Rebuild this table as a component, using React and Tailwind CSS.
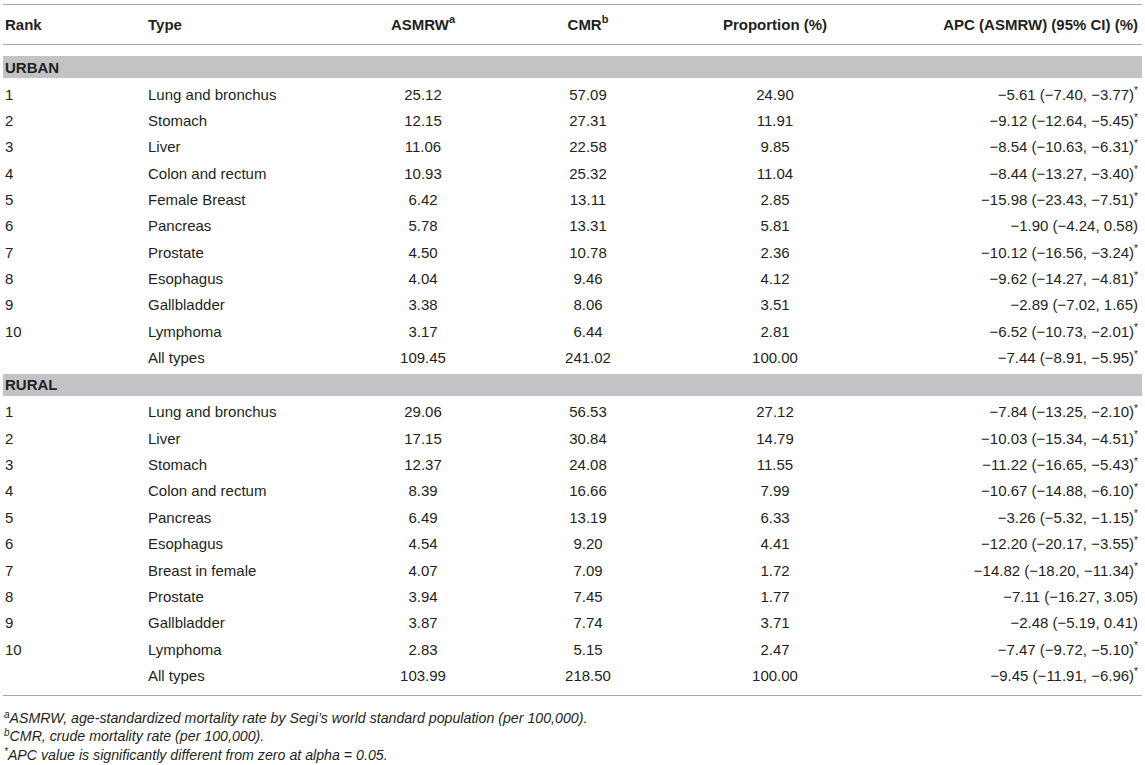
import React from "react";

const M = "\u2212";

const urban = [
  ["1", "Lung and bronchus", "25.12", "57.09", "24.90", `${M}5.61 (${M}7.40, ${M}3.77)`, true],
  ["2", "Stomach", "12.15", "27.31", "11.91", `${M}9.12 (${M}12.64, ${M}5.45)`, true],
  ["3", "Liver", "11.06", "22.58", "9.85", `${M}8.54 (${M}10.63, ${M}6.31)`, true],
  ["4", "Colon and rectum", "10.93", "25.32", "11.04", `${M}8.44 (${M}13.27, ${M}3.40)`, true],
  ["5", "Female Breast", "6.42", "13.11", "2.85", `${M}15.98 (${M}23.43, ${M}7.51)`, true],
  ["6", "Pancreas", "5.78", "13.31", "5.81", `${M}1.90 (${M}4.24, 0.58)`, false],
  ["7", "Prostate", "4.50", "10.78", "2.36", `${M}10.12 (${M}16.56, ${M}3.24)`, true],
  ["8", "Esophagus", "4.04", "9.46", "4.12", `${M}9.62 (${M}14.27, ${M}4.81)`, true],
  ["9", "Gallbladder", "3.38", "8.06", "3.51", `${M}2.89 (${M}7.02, 1.65)`, false],
  ["10", "Lymphoma", "3.17", "6.44", "2.81", `${M}6.52 (${M}10.73, ${M}2.01)`, true],
  ["", "All types", "109.45", "241.02", "100.00", `${M}7.44 (${M}8.91, ${M}5.95)`, true],
];

const rural = [
  ["1", "Lung and bronchus", "29.06", "56.53", "27.12", `${M}7.84 (${M}13.25, ${M}2.10)`, true],
  ["2", "Liver", "17.15", "30.84", "14.79", `${M}10.03 (${M}15.34, ${M}4.51)`, true],
  ["3", "Stomach", "12.37", "24.08", "11.55", `${M}11.22 (${M}16.65, ${M}5.43)`, true],
  ["4", "Colon and rectum", "8.39", "16.66", "7.99", `${M}10.67 (${M}14.88, ${M}6.10)`, true],
  ["5", "Pancreas", "6.49", "13.19", "6.33", `${M}3.26 (${M}5.32, ${M}1.15)`, true],
  ["6", "Esophagus", "4.54", "9.20", "4.41", `${M}12.20 (${M}20.17, ${M}3.55)`, true],
  ["7", "Breast in female", "4.07", "7.09", "1.72", `${M}14.82 (${M}18.20, ${M}11.34)`, true],
  ["8", "Prostate", "3.94", "7.45", "1.77", `${M}7.11 (${M}16.27, 3.05)`, false],
  ["9", "Gallbladder", "3.87", "7.74", "3.71", `${M}2.48 (${M}5.19, 0.41)`, false],
  ["10", "Lymphoma", "2.83", "5.15", "2.47", `${M}7.47 (${M}9.72, ${M}5.10)`, true],
  ["", "All types", "103.99", "218.50", "100.00", `${M}9.45 (${M}11.91, ${M}6.96)`, true],
];

const grid = "grid grid-cols-[145px_212px_126px_204px_170px_1fr]";

function Row({ r }) {
  return (
    <div className={`${grid} h-[26.35px] items-center`}>
      <div className="pl-[2px]">{r[0]}</div>
      <div>{r[1]}</div>
      <div className="text-center">{r[2]}</div>
      <div className="text-center">{r[3]}</div>
      <div className="text-center">{r[4]}</div>
      <div className="text-right pr-[4px]">
        {r[5]}
        {r[6] ? <sup className="text-[10px] top-[-0.55em]">*</sup> : null}
      </div>
    </div>
  );
}

function Band({ label, top }) {
  return (
    <div className={`${top} mb-[3px] h-[22px] bg-[#c3c3c5] flex items-center pl-[2px] font-bold`}>
      {label}
    </div>
  );
}

export default function App() {
  return (
    <div
      className="w-[1145px] h-[765px] bg-white text-[#231f20] text-[15px] leading-none overflow-hidden"
      style={{ fontFamily: '"Liberation Sans", Arial, Helvetica, sans-serif' }}
    >
      <div className="mx-[3px] mt-[4px] border-t border-[#a7a7a7]">
        <div className={`${grid} h-[40px] items-center font-bold border-b border-[#a7a7a7]`}>
          <div className="pl-[2px]">Rank</div>
          <div>Type</div>
          <div className="text-center">
            ASMRW<sup className="text-[11px] font-bold top-[-0.6em]">a</sup>
          </div>
          <div className="text-center">
            CMR<sup className="text-[11px] font-bold top-[-0.6em]">b</sup>
          </div>
          <div className="text-center">Proportion (%)</div>
          <div className="text-right pr-[4px]">APC (ASMRW) (95% CI) (%)</div>
        </div>
        <Band label="URBAN" top="mt-[11px]" />
        {urban.map((r, i) => (
          <Row key={"u" + i} r={r} />
        ))}
        <Band label="RURAL" top="mt-[3px]" />
        {rural.map((r, i) => (
          <Row key={"r" + i} r={r} />
        ))}
        <div className="mt-[6px] border-t border-[#a7a7a7]" />
        <div className="mt-[13px] italic text-[14.2px] leading-[18.5px] pl-[1px]">
          <div>
            <sup className="text-[10px] top-[-0.5em]">a</sup>ASMRW, age-standardized mortality rate by Segi’s world standard population (per 100,000).
          </div>
          <div>
            <sup className="text-[10px] top-[-0.5em]">b</sup>CMR, crude mortality rate (per 100,000).
          </div>
          <div>
            <sup className="text-[10px] top-[-0.5em]">*</sup>APC value is significantly different from zero at alpha = 0.05.
          </div>
        </div>
      </div>
    </div>
  );
}
